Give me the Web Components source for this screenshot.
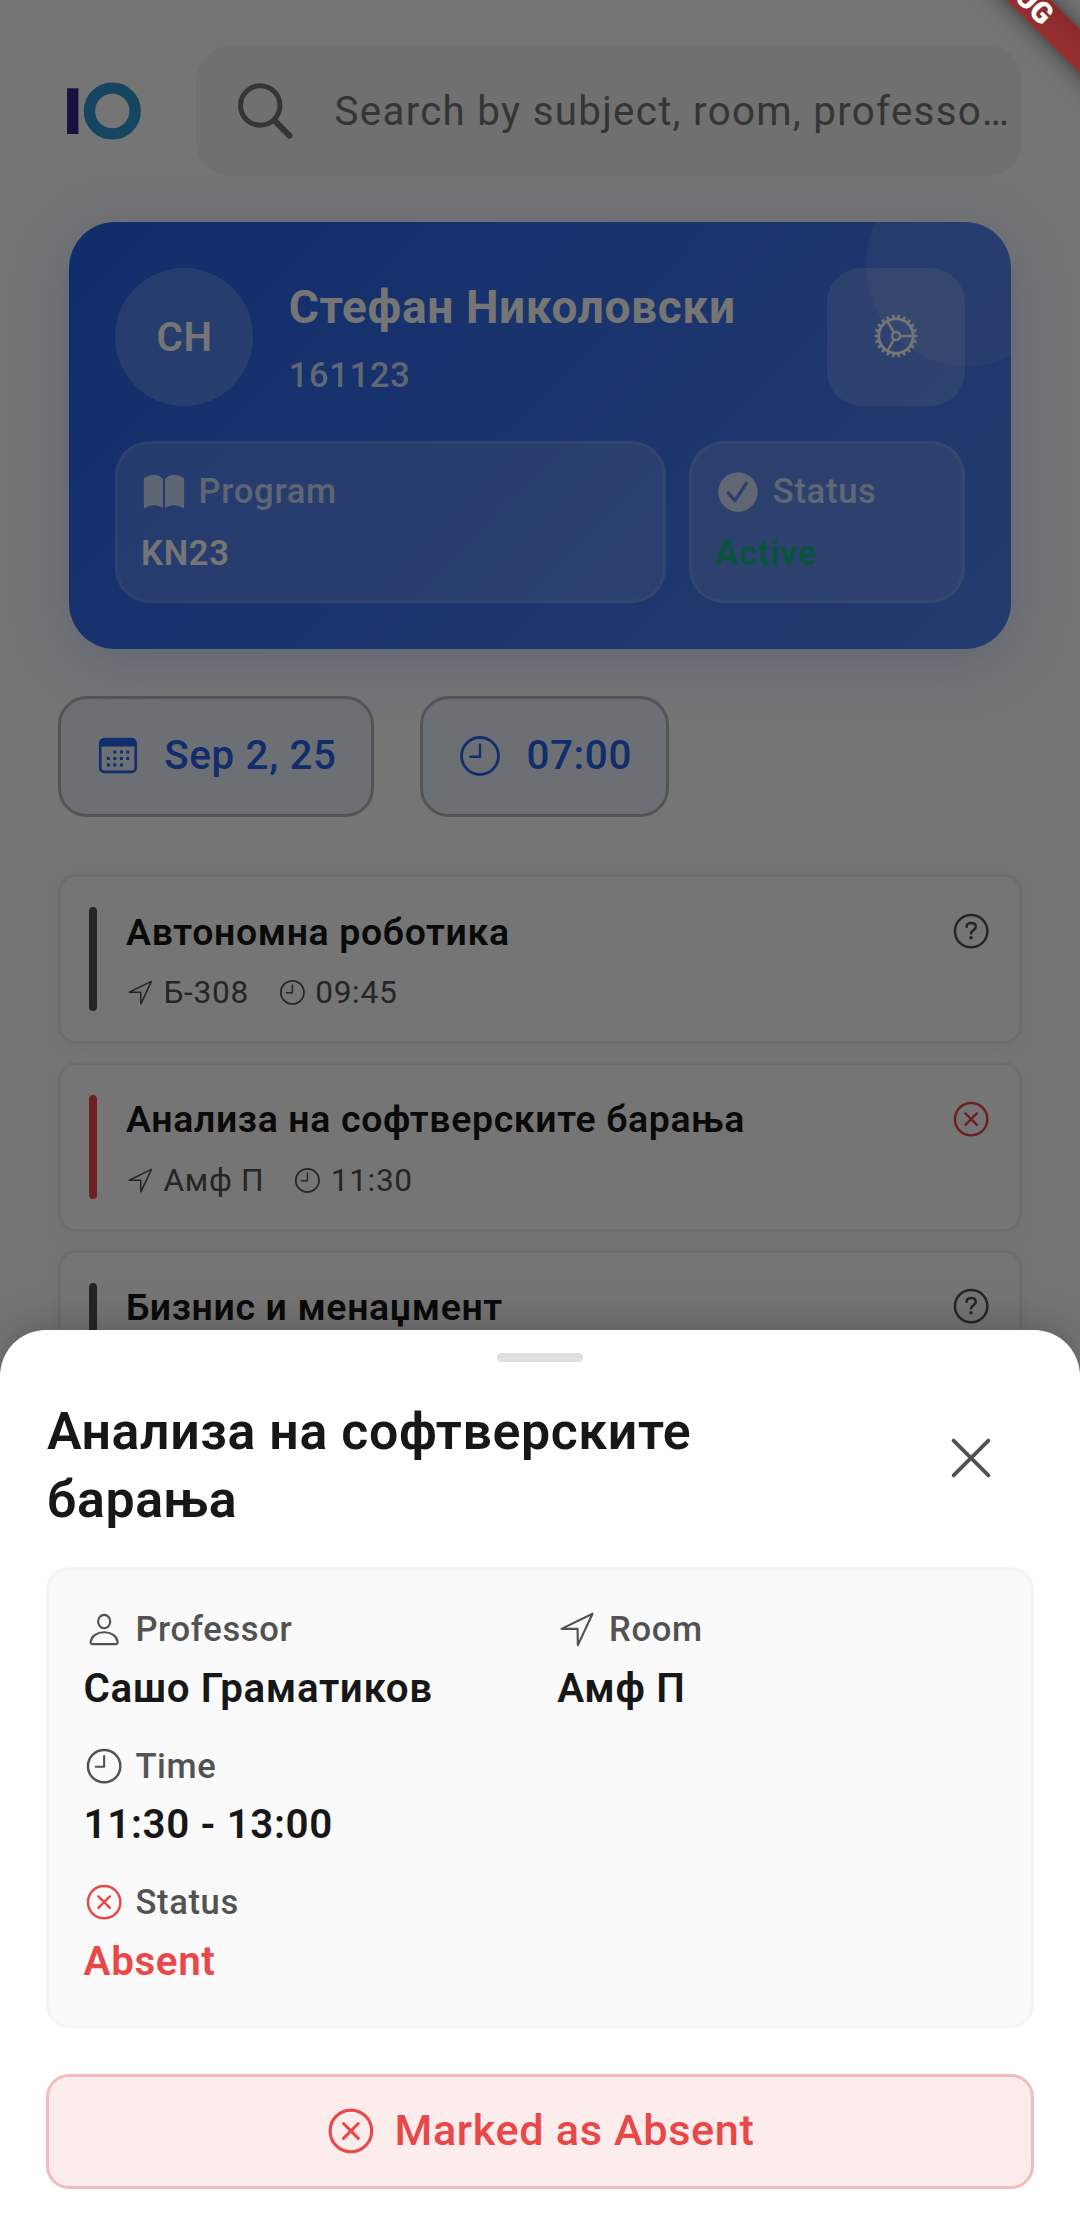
<!DOCTYPE html>
<html lang="en">
<head>
<meta charset="utf-8">
<title>Schedule</title>
<style>
  html, body { margin: 0; background: #757575; }
  body { width: 1080px; height: 2227px; overflow: hidden; position: relative; font-family: Roboto, "Noto Sans", sans-serif; }
</style>
</head>
<body>
<app-screen>
  <search-header placeholder="Search by subject, room, professo…"></search-header>
  <profile-card initials="СН" name="Стефан Николовски" index="161123">
    <info-tile icon="book" label="Program">KN23</info-tile>
    <info-tile icon="check" label="Status" style="--value:#10b981">Active</info-tile>
  </profile-card>
  <filter-row>
    <filter-chip icon="calendar">Sep 2, 25</filter-chip>
    <filter-chip icon="clock">07:00</filter-chip>
  </filter-row>
  <class-list>
    <class-card icon="question" room="Б-308" time="09:45">Автономна роботика</class-card>
    <class-card icon="cross" room="Амф П" time="11:30" style="--tone:#ef4444">Анализа на софтверските барања</class-card>
    <class-card icon="question" room="Б-308" time="09:45">Бизнис и менаџмент</class-card>
  </class-list>
  <bottom-sheet slot="sheet">
    <span slot="title">Анализа на софтверските барања</span>
    <detail-item icon="person" label="Professor">Сашо Граматиков</detail-item>
    <detail-item icon="arrow" label="Room">Амф П</detail-item>
    <detail-item icon="clock" label="Time" wide>11:30 - 13:00</detail-item>
    <detail-item icon="cross" label="Status" wide style="--icon:#e84848;--value:#e84848">Absent</detail-item>
    <status-button slot="action" icon="cross">Marked as Absent</status-button>
  </bottom-sheet>
  <debug-banner slot="banner">DEBUG</debug-banner>
</app-screen>

<script>
const RING = '<circle r="22.5" stroke-width="3.4"/>';
const ICONS = {
  clock: RING + '<path d="M0-14.2V.9H-11.7" stroke-width="2.9"/>',
  cross: RING + '<path d="M-8-8 8 8M8-8-8 8" stroke-width="3.3"/>',
  question: RING + '<path d="M-6.2-6.2C-6.1-9.6-3.5-11.2 0-11.2C3.8-11.2 6.4-9.2 6.4-6C6.4-3.5 5-2.3 3-1.1C1 .1-.2 1-.2 3.4" stroke-width="3.5"/><circle cx="-.2" cy="9.2" r="2.5" fill="currentColor" stroke="none"/>',
  arrow: '<path d="M-21.8-.4 21.4-21.4 1 22.2.6-.4Z" stroke-width="3"/>',
  person: '<ellipse cy="-10.6" rx="8.4" ry="9.3" stroke-width="3"/><path d="M-15.5 20.8C-18.2 20.8-19 19.8-18.8 17.6C-17.6 9.6-10 4.3 0 4.3C10 4.3 17.6 9.6 18.8 17.6C19 19.8 18.2 20.8 15.5 20.8Z" stroke-width="3"/>',
  calendar: '<rect x="-21.6" y="-20.5" width="43.2" height="39.8" rx="5" stroke-width="3.2"/><path d="M-22-11.6V-16Q-22-21-17-21H17Q22-21 22-16V-11.6Z" fill="currentColor" stroke="none"/><path d="M-3.9-4.9h.01M4.2-4.9h.01M11.8-4.9h.01M-11.8 3h.01M-3.9 3h.01M4.2 3h.01M11.8 3h.01M-11.8 11h.01M-3.9 11h.01M4.2 11h.01" stroke-width="3.6" stroke-linecap="square"/>',
  book: '<g fill="currentColor" stroke="none"><path d="M-24.5-16C-20-22.4-5-22.4-1.3-15.5V19.4C-8 15.2-17 15.2-22.8 19.3Q-24.5 20.3-24.5 18.6Z"/><path transform="scale(-1 1)" d="M-24.5-16C-20-22.4-5-22.4-1.3-15.5V19.4C-8 15.2-17 15.2-22.8 19.3Q-24.5 20.3-24.5 18.6Z"/></g>',
  check: '<mask id="tick"><rect x="-28" y="-28" width="56" height="56" fill="#fff" stroke="none"/><path d="M-11.8 1-3.7 10.6 10-10.4" stroke="#000" stroke-width="4"/></mask><circle r="24.1" fill="currentColor" stroke="none" mask="url(#tick)"/>'
};
const icon = (name, size) =>
  `<svg width="${size}" height="${size}" viewBox="-28 -28 56 56" fill="none" stroke="currentColor" stroke-linecap="round" stroke-linejoin="round">${ICONS[name]}</svg>`;

function element(name, render) {
  customElements.define(name, class extends HTMLElement {
    connectedCallback() {
      if (this.shadowRoot) return;
      const root = this.attachShadow({ mode: 'open' });
      root.innerHTML = '<style>*{box-sizing:border-box}svg{display:block;flex:none}:host{box-sizing:border-box}</style>' +
        render(key => this.getAttribute(key) || '');
    }
  });
}

element('app-screen', () => `
<style>
  :host { display: block; position: relative; width: 1080px; height: 2227px; overflow: hidden; background: #fefefe; }
  .scrim { position: absolute; inset: 0; background: rgba(0,0,0,.54); }
  .sheet { position: absolute; left: 0; right: 0; bottom: 0; }
</style>
<slot></slot><div class="scrim"></div><div class="sheet"><slot name="sheet"></slot></div><slot name="banner"></slot>`);

element('search-header', a => `
<style>
  :host { display: flex; align-items: center; gap: 46px; padding: 46px 57.6px 0; }
  .logo { width: 92.2px; height: 92.2px; }
  .field { flex: 1; height: 129.6px; border-radius: 34.5px; background: #f3f3f3; display: flex; align-items: center; gap: 39.6px; padding-left: 39.2px; color: #737373; overflow: hidden; }
  span { font-size: 40.32px; letter-spacing: 1.28px; white-space: nowrap; padding-top: 1px; }
</style>
<svg class="logo" viewBox="58.1 64.7 92.2 92.2"><rect x="67.2" y="88" width="11.3" height="45.7" fill="#322789"/><circle cx="112.4" cy="110.7" r="22.9" fill="none" stroke="#2e96d4" stroke-width="11.4"/></svg>
<div class="field">
  <svg width="60" height="60" viewBox="235 81 60 60" fill="none" stroke="currentColor" stroke-linecap="round"><circle cx="260.2" cy="105.5" r="19.7" stroke-width="5"/><path d="M275.3 121.3 289.4 135.6" stroke-width="6"/></svg>
  <span>${a('placeholder')}</span>
</div>`);

element('profile-card', a => `
<style>
  :host { display: flex; flex-direction: column; gap: 35px; position: relative; margin: 46.1px 69.1px 0; height: 427.6px; padding: 46px; border-radius: 46px; overflow: hidden; color: #fff;
    background: linear-gradient(135deg, #2563eb, #4f80ef); box-shadow: 0 11.5px 57.6px rgba(37,99,235,.24); }
  .glow { position: absolute; top: -57.6px; right: -57.6px; width: 202.4px; height: 202.4px; border-radius: 50%; background: rgba(255,255,255,.1); }
  .top { display: flex; align-items: center; position: relative; height: 138.2px; }
  .avatar { width: 138.2px; height: 138.2px; border-radius: 50%; background: rgba(255,255,255,.2); display: flex; align-items: center; justify-content: center; font-size: 40.32px; font-weight: 600; letter-spacing: .7px; padding: 1px 0 0 1px; }
  .who { flex: 1; margin-left: 35.4px; display: flex; flex-direction: column; gap: 11.2px; }
  .name { font-size: 46.08px; line-height: 66px; font-weight: 700; letter-spacing: .63px; }
  .idx { font-size: 34.56px; line-height: 49px; font-weight: 500; letter-spacing: .7px; opacity: .78; }
  .gear { width: 138.2px; height: 138.2px; border-radius: 34.5px; background: rgba(255,255,255,.19); display: flex; align-items: center; justify-content: center; }
  .tiles { display: grid; grid-template-columns: 2fr 1fr; gap: 23px; position: relative; }
</style>
<div class="glow"></div>
<div class="top">
  <div class="avatar">${a('initials')}</div>
  <div class="who"><div class="name">${a('name')}</div><div class="idx">${a('index')}</div></div>
  <div class="gear"><svg width="46" height="46" viewBox="-23 -22 46 46" fill="none" stroke="currentColor">
    <circle r="17.3" stroke-width="3.1"/><circle r="19.7" stroke-width="3.4" pathLength="220" stroke-dasharray="4.4 5.6" stroke-dashoffset="2.2"/>
    <circle r="4" stroke-width="2.4"/><path d="M4.6 0H17M-2.3 4-8.4 14.6M-2.3-4-8.4-14.6" stroke-width="2.4"/></svg></div>
</div>
<div class="tiles"><slot></slot></div>`);

element('info-tile', a => `
<style>
  :host { display: flex; flex-direction: column; gap: 12.4px; height: 162.6px; min-width: 0; border: 3px solid rgba(255,255,255,.11); border-radius: 34.5px; background: rgba(255,255,255,.16); padding: 23.3px 23px; font-size: 34.56px; line-height: 49.4px; }
  .label { display: flex; align-items: center; gap: 11.5px; height: 49.4px; font-weight: 500; letter-spacing: .7px; color: rgba(255,255,255,.72); }
  .value { font-weight: 600; letter-spacing: .72px; color: var(--value, #fff); }
</style>
<div class="label">${icon(a('icon'), 46)}<span>${a('label')}</span></div><div class="value"><slot></slot></div>`);

element('filter-row', () => `
<style>:host { display: flex; gap: 46.2px; padding: 46.4px 57.6px 0; }</style><slot></slot>`);

element('filter-chip', a => `
<style>
  :host { display: flex; align-items: center; gap: 23.2px; height: 121px; padding: 0 33.9px 1px 34.5px; border: 3px solid #b8b8b8; border-radius: 28.8px; background: #ecf4fd; color: #2563eb; font-size: 40.32px; font-weight: 500; letter-spacing: .66px; white-space: nowrap; }
</style>${icon(a('icon'), 46)}<span><slot></slot></span>`);

element('class-list', () => `
<style>:host { display: flex; flex-direction: column; gap: 17.7px; padding: 57.6px 57.6px 0; }</style><slot></slot>`);

element('class-card', a => `
<style>
  :host { display: flex; align-items: center; height: 170.1px; padding: 0 28px; border: 3px solid #eee; border-radius: 18px; background: #fff; box-shadow: 0 5.8px 17px rgba(0,0,0,.04); }
  .bar { width: 8.9px; height: 104px; border-radius: 4.3px; background: var(--tone, #525252); }
  .text { flex: 1; margin-left: 28.6px; padding-top: 2px; display: flex; flex-direction: column; gap: 10.8px; }
  .title { font-size: 37.44px; line-height: 53.5px; font-weight: 600; letter-spacing: .65px; color: #171717; white-space: nowrap; }
  .meta { display: flex; align-items: center; gap: 8.6px; font-size: 31.68px; line-height: 45px; letter-spacing: .65px; color: #525252; white-space: nowrap; }
  .meta svg + span + svg { margin-left: 20.4px; }
  .state { align-self: flex-start; margin-top: 33.6px; color: var(--tone, #525252); }
</style>
<div class="bar"></div>
<div class="text"><div class="title"><slot></slot></div>
<div class="meta">${icon('arrow', 28.8)}<span>${a('room')}</span>${icon('clock', 28.8)}<span>${a('time')}</span></div></div>
<div class="state">${icon(a('icon'), 40.3)}</div>`);

element('bottom-sheet', () => `
<style>
  :host { display: flex; flex-direction: column; height: 897px; padding: 23px 46px 0; background: #fff; border-radius: 46px 46px 0 0; box-shadow: 0 -6px 40px rgba(0,0,0,.2); }
  .grip { align-self: center; width: 86.4px; height: 8.6px; border-radius: 4.3px; background: #e0e0e0; }
  .head { display: flex; justify-content: space-between; margin-top: 35.6px; height: 135.8px; }
  .title { width: 780px; padding: 1px 0 0 1px; font-size: 51.84px; line-height: 67.9px; font-weight: 600; letter-spacing: .6px; color: #171717; }
  .close { width: 126px; height: 122.4px; display: flex; align-items: center; justify-content: center; color: #525252; }
  .grid { margin-top: 34px; height: 460.8px; border: 3px solid #f5f5f5; border-radius: 23px; background: #fafafa; padding: 34.4px 34.6px; display: grid; grid-template-columns: 1fr 1fr; column-gap: 34.6px; row-gap: 23.9px; align-content: start; }
  .action { margin-top: 46px; }
</style>
<div class="grip"></div>
<div class="head"><div class="title"><slot name="title"></slot></div>
<div class="close"><svg width="44" height="44" viewBox="-22 -22 44 44" fill="none" stroke="currentColor" stroke-width="3.8" stroke-linecap="round"><path d="M-17.4-17.4 17.4 17.4M17.4-17.4-17.4 17.4"/></svg></div></div>
<div class="grid"><slot></slot></div>
<div class="action"><slot name="action"></slot></div>`);

element('detail-item', a => `
<style>
  :host { display: flex; flex-direction: column; gap: 5.8px; height: 112.8px; white-space: nowrap; }
  :host([wide]) { grid-column: 1 / -1; }
  .label { display: flex; align-items: center; gap: 11.5px; height: 49.4px; font-size: 34.56px; font-weight: 500; letter-spacing: .66px; color: #525252; }
  .label svg { color: var(--icon, #525252); }
  .value { font-size: 40.32px; line-height: 57.6px; font-weight: 600; letter-spacing: .64px; color: var(--value, #171717); }
</style>
<div class="label">${icon(a('icon'), 40.3)}<span>${a('label')}</span></div><div class="value"><slot></slot></div>`);

element('status-button', a => `
<style>
  :host { display: flex; align-items: center; justify-content: center; gap: 17.3px; height: 115.2px; padding-bottom: 1px; border: 3px solid #f3bcbc; border-radius: 23px; background: #fdecec; color: #e84848; font-size: 43.2px; font-weight: 500; letter-spacing: .66px; }
</style>${icon(a('icon'), 51.8)}<span><slot></slot></span>`);

element('debug-banner', () => `
<style>
  :host { position: absolute; left: 815.4px; top: -28.8px; width: 400px; height: 31px; transform: rotate(45deg); display: flex; align-items: center; justify-content: center; background: linear-gradient(#8b2a2b, #952f30); color: #fff; font-size: 29.4px; line-height: 31px; font-weight: 900; box-shadow: 0 0 22px rgba(0,0,0,.55); }
</style><slot></slot>`);
</script>
</body>
</html>
